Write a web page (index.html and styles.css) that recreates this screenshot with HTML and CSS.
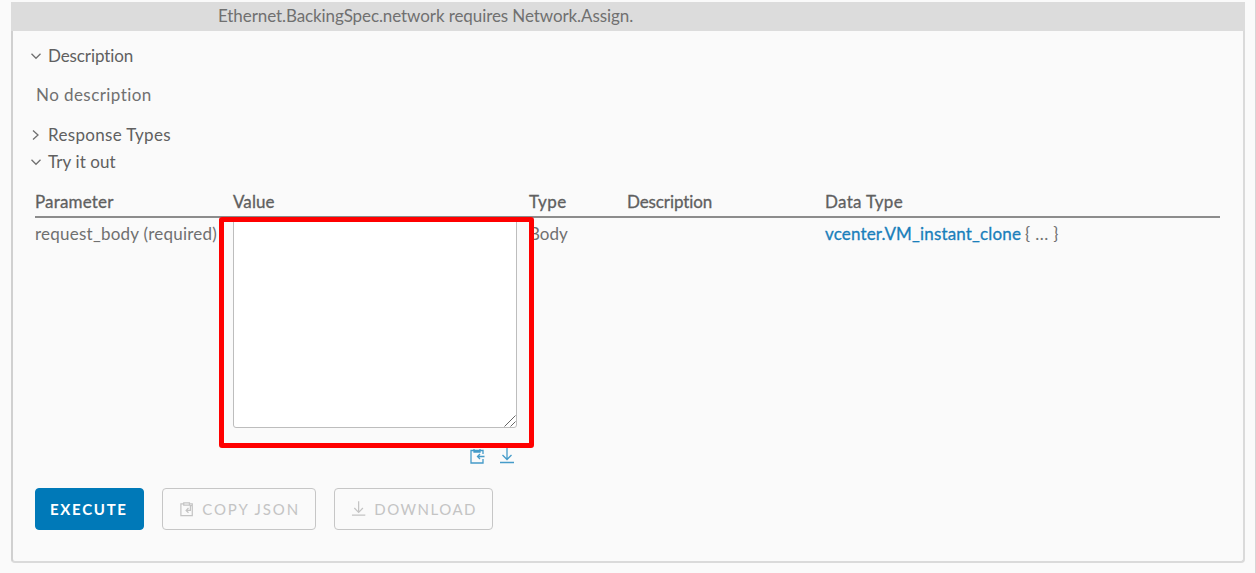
FILE: index.html
```
<!DOCTYPE html>
<html lang="en">
<head>
<meta charset="utf-8">
<title>API Explorer</title>
<link rel="stylesheet" href="styles.css">
</head>
<body>
<main class="panel">
  <div class="notice"><span class="notice-text">Ethernet.BackingSpec.network requires Network.Assign.</span></div>
  <section class="content">
    <div class="toggle toggle-description"><svg class="caret" viewBox="0 0 12 12"><path d="M1.500 3.800 6 8.300l4.500-4.500"/></svg><span class="t-desc">Description</span></div>
    <p class="empty"><span class="t-none">No description</span></p>
    <div class="toggle toggle-response"><svg class="caret" viewBox="0 0 12 12"><path d="M3 1.500 8 6l-5 4.500"/></svg><span class="t-resp">Response Types</span></div>
    <div class="toggle toggle-try"><svg class="caret" viewBox="0 0 12 12"><path d="M1.500 3.800 6 8.300l4.500-4.500"/></svg><span class="t-try">Try it out</span></div>
    <div class="grid head">
      <span class="h-param">Parameter</span><span class="h-value">Value</span><span class="h-type">Type</span><span class="h-desc">Description</span><span class="h-data">Data Type</span>
    </div>
    <div class="grid row">
      <span class="cell c-name">request_body (required)</span>
      <div class="editor">
        <div class="textarea"><svg class="grip" viewBox="0 0 12 12"><path d="M.5 11.500l11-11M6.500 11.500l5-5"/></svg></div>
        <div class="tools">
          <svg class="icon" viewBox="0 0 16 16"><path d="M14 6V2.500H2V15h12v-4M5 1v3h6V1M15.500 8.500H9M11 6 8.500 8.500 11 11"/></svg>
          <svg class="icon" viewBox="0 0 16 16"><path d="M8 0v11M3.500 7 8 11.500 12.500 7M1 14.500h14"/></svg>
        </div>
        <div class="highlight"></div>
      </div>
      <span class="cell c-body">Body</span>
      <span></span>
      <span class="cell c-data"><a class="link">vcenter.VM_instant_clone</a><span class="braces">{ ... }</span></span>
    </div>
    <div class="actions">
      <button class="btn primary"><span class="b-exec">EXECUTE</span></button>
      <button class="btn copy"><svg class="icon" viewBox="0 0 16 16"><path d="M5 2.500H2V15h12V2.500h-3M5 4V1.500h6V4zM14 4.500h-2v5H8M10 7 7.500 9.500 10 12"/></svg><span class="b-copy">COPY JSON</span></button>
      <button class="btn download"><svg class="icon" viewBox="0 0 16 16"><path d="M8 0v11M3.500 7 8 11.500 12.500 7M1 14.500h14"/></svg><span class="b-down">DOWNLOAD</span></button>
    </div>
  </section>
</main>
<div class="edge"></div>
</body>
</html>
```
FILE: styles.css
```
* { box-sizing: border-box; }
body { margin: 0; width: 1256px; height: 573px; padding: 2px 0 0 11px; display: flex; justify-content: space-between; overflow: hidden; background: #fafafa; color: #707070; font-family: Lato, sans-serif; font-size: 17px; line-height: 20px; font-variant-ligatures: none; }
.panel { width: 1234px; height: 561px; border: 2px solid #dadada; border-left-color: #d0d0d0; border-top: 0; border-radius: 0 0 4px 4px; }
.edge { width: 1px; height: 573px; margin-top: -2px; background: #d6d6d6; }
.notice { height: 29px; margin: 0 -2px; padding: 4px 0 0 207px; background: #dcdcdc; }
.notice-text { letter-spacing: -.09px; }
.content { padding: 15px 23px 0 22px; }
.toggle { display: flex; align-items: center; height: 20px; margin-left: -5px; color: #606060; }
.caret { width: 12px; height: 12px; margin-right: 6px; fill: none; stroke: #707070; stroke-width: 1.3; }
.t-desc { letter-spacing: -.1px; }
.t-none { letter-spacing: .43px; }
.t-resp { letter-spacing: .32px; }
.t-try { letter-spacing: .1px; }
.empty { margin: 19px 0; padding-left: 1px; line-height: 20px; }
.toggle-response { padding-top: 1px; }
.toggle-try { margin-top: 8px; }
.grid { display: grid; grid-template-columns: 198px 296px 98px 198px 1fr; }
.head { margin-top: 20px; height: 26px; border-bottom: 2px solid #8c8c8c; color: #606060; }
.head span { -webkit-text-stroke: .3px #606060; }
.h-param { letter-spacing: .17px; }
.h-value { letter-spacing: .1px; }
.h-type { letter-spacing: .5px; }
.h-desc { letter-spacing: -.1px; }
.h-data { letter-spacing: .3px; }
.row { height: 270px; }
.cell { padding-top: 6px; white-space: nowrap; }
.c-name { letter-spacing: .24px; }
.editor { position: relative; }
.textarea { display: flex; justify-content: flex-end; align-items: flex-end; width: 284px; height: 210px; border: 1px solid #bdbdbd; border-radius: 3px; background: #fff; }
.grip { width: 12px; height: 12px; fill: none; stroke: #666; stroke-width: 1; }
.icon { width: 16px; height: 16px; fill: none; stroke: currentColor; stroke-width: 1.3; }
.tools { display: flex; gap: 14px; margin: 20px 0 0 236px; color: #459bc9; }
.highlight { position: absolute; left: -14px; top: -1px; width: 315px; height: 231px; border: 5px solid #f00; border-radius: 3px; }
.link { color: #1a7fbb; letter-spacing: .16px; -webkit-text-stroke: .3px #1a7fbb; }
.braces { margin-left: 4px; letter-spacing: .4px; }
.actions { display: flex; }
.btn { display: flex; align-items: center; height: 42px; padding: 0 15px; border: 1px solid #c6c6c6; border-radius: 4px; background: transparent; color: #c4c4c4; font: 15px Lato, sans-serif; letter-spacing: 1.5px; white-space: nowrap; }
.primary { width: 109px; background: #0079b8; border-color: #0079b8; color: #fff; font-weight: 700; padding: 0 14px; letter-spacing: 1.7px; }
.copy { width: 154px; margin-left: 18px; padding-left: 16px; }
.download { width: 159px; margin-left: 18px; padding-left: 16px; }
.btn .icon { margin-right: 8px; }
.b-copy { letter-spacing: 1.9px; }
```
